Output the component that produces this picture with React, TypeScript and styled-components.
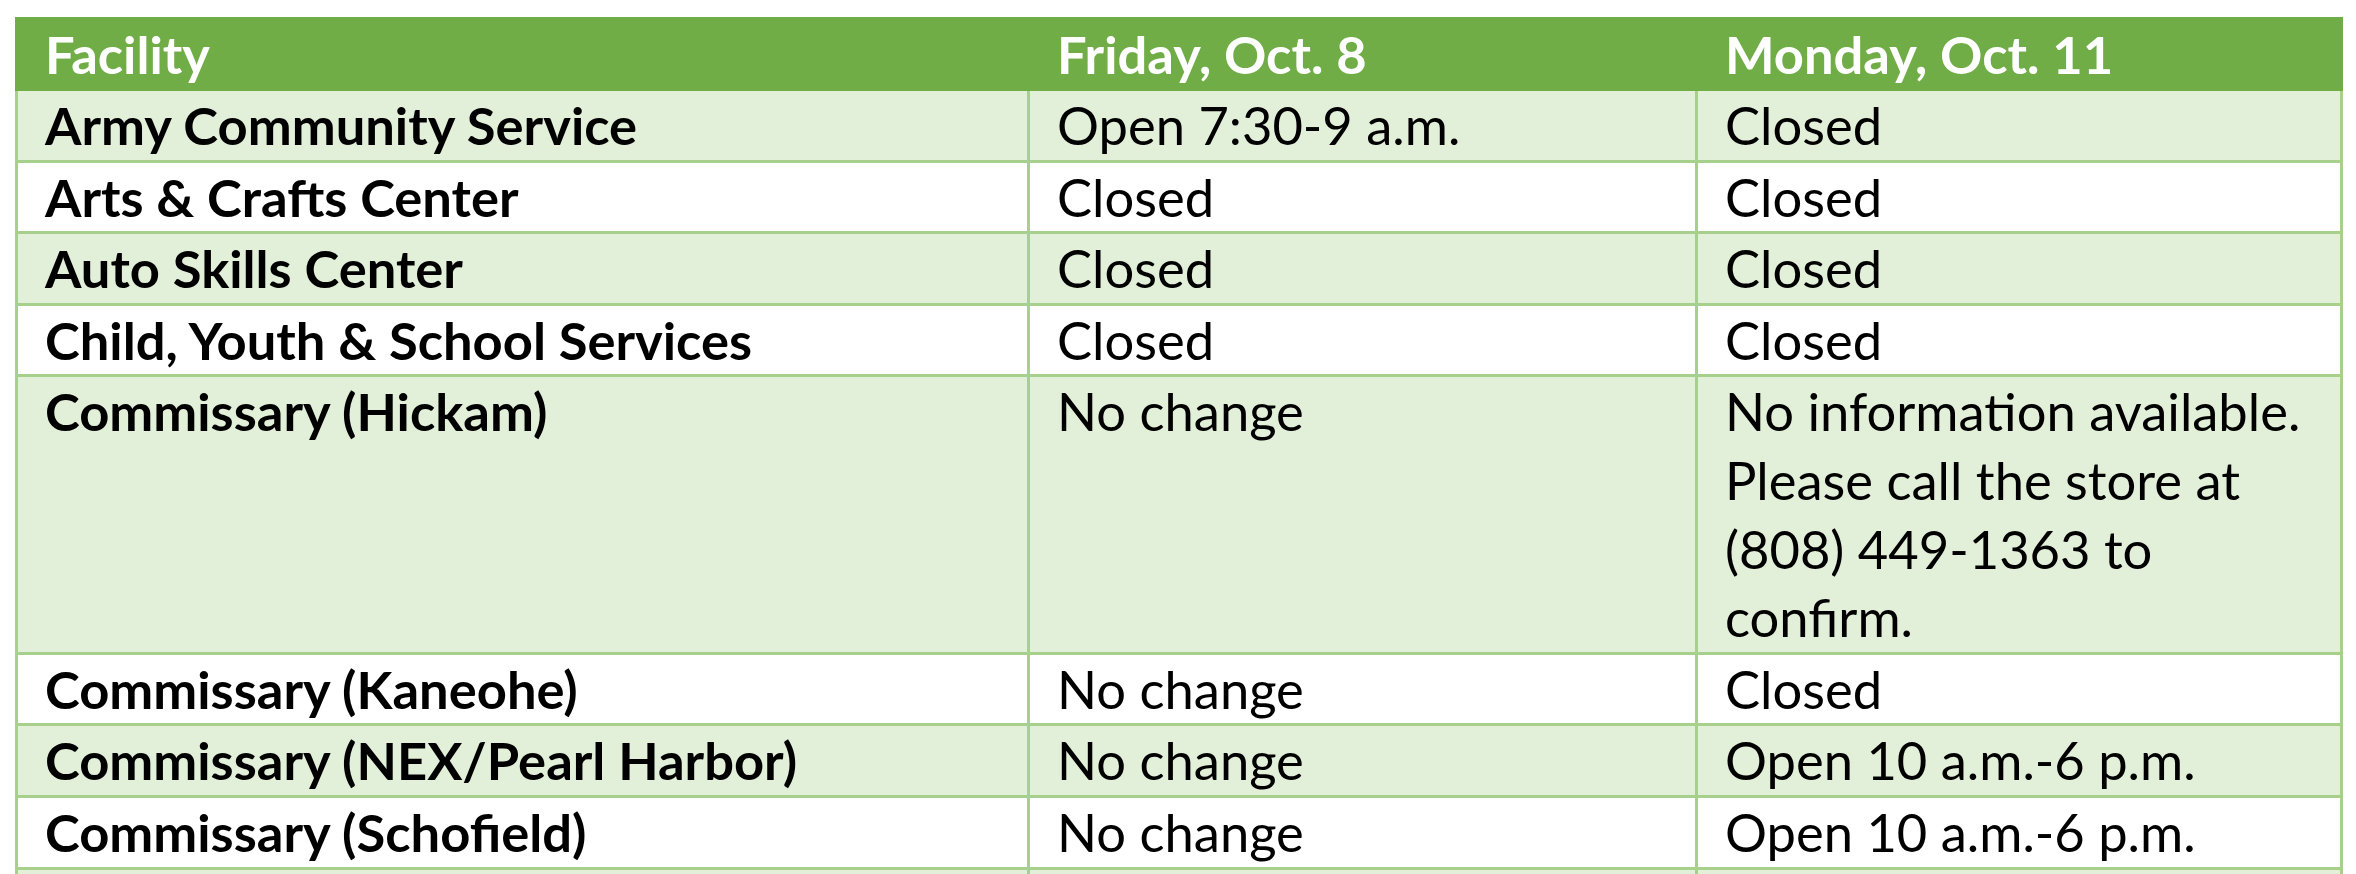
import React from "react";
import styled, { createGlobalStyle } from "styled-components";

const GlobalStyle = createGlobalStyle`
  html, body { margin: 0; padding: 0; background: #ffffff; }
  body { font-family: "Lato", "Open Sans", sans-serif; }
`;

const COLS = "1009px 665px 642px";
const BORDER = "#a8d08d";

const Page = styled.div`
  padding: 17px 0 0 15px;
`;

const Table = styled.div`
  width: 2328px;
  display: flex;
  flex-direction: column;
  font-family: "Lato", "Open Sans", sans-serif;
  font-size: 52.5px;
  line-height: 68.6px;
  color: #000000;
`;

const HeaderRow = styled.div`
  display: grid;
  grid-template-columns: ${COLS};
  column-gap: 3px;
  padding: 3px 3px 2.4px;
  background: #70ad47;
  color: #ffffff;
  font-weight: 700;
`;

const HeaderCell = styled.div`
  padding-left: 27px;
  white-space: nowrap;
`;

const Row = styled.div`
  display: grid;
  grid-template-columns: ${COLS};
  column-gap: 3px;
  padding: 0 3px;
  background: ${BORDER};
  border-bottom: 3px solid ${BORDER};
`;

const Cell = styled.div<{ $band: boolean; $bold?: boolean }>`
  background: ${(p) => (p.$band ? "#e2efd9" : "#ffffff")};
  font-weight: ${(p) => (p.$bold ? 700 : 400)};
  padding: 0 20px 0 27px;
  min-height: 68.6px;
`;

type Entry = { facility: string; friday: string; monday: string };

const rows: Entry[] = [
  { facility: "Army Community Service", friday: "Open 7:30-9 a.m.", monday: "Closed" },
  { facility: "Arts & Crafts Center", friday: "Closed", monday: "Closed" },
  { facility: "Auto Skills Center", friday: "Closed", monday: "Closed" },
  { facility: "Child, Youth & School Services", friday: "Closed", monday: "Closed" },
  {
    facility: "Commissary (Hickam)",
    friday: "No change",
    monday: "No information available. Please call the store at (808) 449-1363 to confirm.",
  },
  { facility: "Commissary (Kaneohe)", friday: "No change", monday: "Closed" },
  { facility: "Commissary (NEX/Pearl Harbor)", friday: "No change", monday: "Open 10 a.m.-6 p.m." },
  { facility: "Commissary (Schofield)", friday: "No change", monday: "Open 10 a.m.-6 p.m." },
  { facility: "", friday: "", monday: "" },
];

export default function App() {
  return (
    <>
      <GlobalStyle />
      <Page>
        <Table>
          <HeaderRow>
            <HeaderCell>Facility</HeaderCell>
            <HeaderCell>Friday, Oct. 8</HeaderCell>
            <HeaderCell>Monday, Oct. 11</HeaderCell>
          </HeaderRow>
          {rows.map((r, i) => {
            const band = i % 2 === 0;
            return (
              <Row key={i}>
                <Cell $band={band} $bold>
                  {r.facility}
                </Cell>
                <Cell $band={band}>{r.friday}</Cell>
                <Cell $band={band}>{r.monday}</Cell>
              </Row>
            );
          })}
        </Table>
      </Page>
    </>
  );
}
